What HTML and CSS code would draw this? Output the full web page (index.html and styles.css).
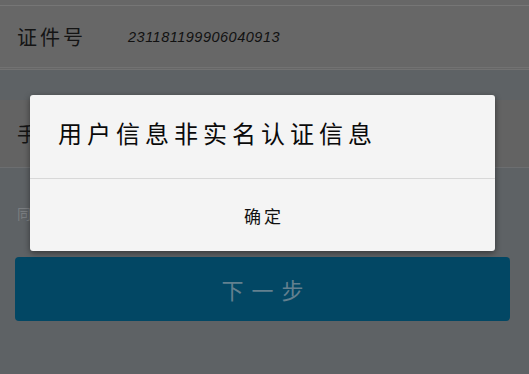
FILE: index.html
```html
<!DOCTYPE html>
<html lang="zh-CN">
<head>
<meta charset="utf-8">
<title>实名认证</title>
<link rel="stylesheet" href="styles.css">
</head>
<body>
<div class="page">
  <div class="row row-top"></div>
  <div class="row row-id">
    <span class="label">证件号</span>
    <span class="value">231181199906040913</span>
  </div>
  <div class="spacer"></div>
  <div class="row row-phone">
    <span class="label">手机号</span>
  </div>
  <div class="agree">同意《用户服务协议》</div>
  <button class="next">下一步</button>
</div>
<div class="overlay">
  <div class="dialog">
    <div class="dialog-msg">用户信息非实名认证信息</div>
    <div class="dialog-btn">确定</div>
  </div>
</div>
</body>
</html>
```

FILE: styles.css
```css
html, body {
  margin: 0;
  padding: 0;
}
body {
  width: 529px;
  height: 374px;
  overflow: hidden;
  background: #5e6265;
  font-family: "Noto Sans CJK SC", "Noto Sans", sans-serif;
  position: relative;
}
.page {
  display: flex;
  flex-direction: column;
}
.row {
  display: flex;
  align-items: center;
  background: #676767;
  box-sizing: border-box;
}
.row-top {
  height: 6px;
  border-bottom: 1px solid #767676;
}
.row-id {
  height: 64px;
  padding-left: 17px;
  border-bottom: 3px double #727272;
}
.label {
  font-size: 20px;
  letter-spacing: 3px;
  color: #141414;
  width: 111px;
  line-height: 1;
}
.value {
  font-family: "Liberation Sans", sans-serif;
  font-style: italic;
  font-size: 14.5px;
  letter-spacing: 0.5px;
  color: #111;
}
.spacer {
  height: 30px;
}
.row-phone {
  height: 68px;
  padding-left: 17px;
  background: #636363;
  border-bottom: 1px solid #6c6e70;
}
.agree {
  margin: 36px 0 0 17px;
  font-size: 14px;
  line-height: 18px;
  color: #7a7d80;
}
.next {
  margin: 35px 19px 0 15px;
  height: 64px;
  border: none;
  border-radius: 4px;
  background: #024764;
  color: #63808f;
  font-family: "Noto Sans CJK SC", sans-serif;
  font-size: 22px;
  letter-spacing: 8px;
  text-indent: 8px;
}
.overlay {
  position: absolute;
  inset: 0;
}
.dialog {
  position: absolute;
  left: 30px;
  top: 95px;
  width: 465px;
  height: 156px;
  background: #f4f4f4;
  border-radius: 3px;
  box-shadow: 0 2px 6px rgba(0, 0, 0, 0.45);
  display: flex;
  flex-direction: column;
}
.dialog-msg {
  height: 84px;
  box-sizing: border-box;
  padding: 22px 0 0 28px;
  font-size: 24px;
  line-height: 32px;
  letter-spacing: 5px;
  color: #0a0a0a;
  border-bottom: 1px solid #d8d8d8;
}
.dialog-btn {
  flex: 1;
  display: flex;
  align-items: center;
  justify-content: center;
  font-size: 17px;
  letter-spacing: 3px;
  text-indent: 3px;
  color: #111;
}
```
